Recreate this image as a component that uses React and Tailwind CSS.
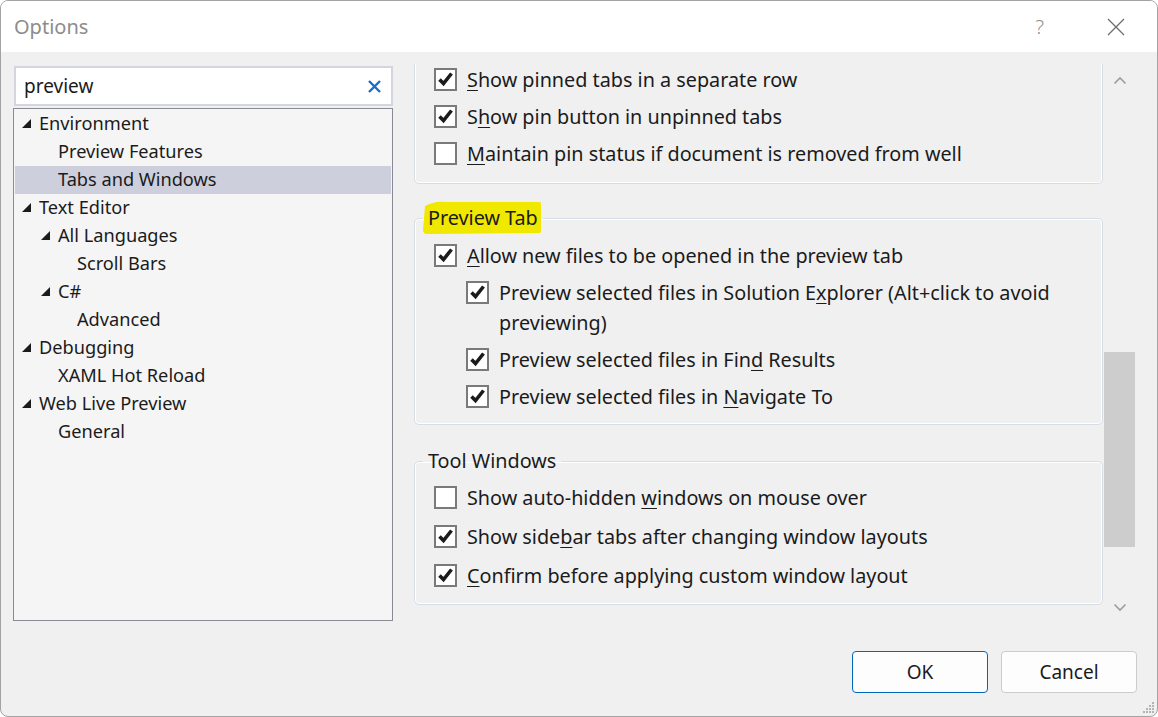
import React from "react";

const font = { fontFamily: '"Noto Sans", "Open Sans", sans-serif' };

const treeItems = [
  { label: "Environment", level: 0, open: true },
  { label: "Preview Features", level: 1 },
  { label: "Tabs and Windows", level: 1, selected: true },
  { label: "Text Editor", level: 0, open: true },
  { label: "All Languages", level: 1, open: true },
  { label: "Scroll Bars", level: 2 },
  { label: "C#", level: 1, open: true },
  { label: "Advanced", level: 2 },
  { label: "Debugging", level: 0, open: true },
  { label: "XAML Hot Reload", level: 1 },
  { label: "Web Live Preview", level: 0, open: true },
  { label: "General", level: 1 },
];

const indents = ["pl-[7px]", "pl-[26px]", "pl-[45px]"];

function Checkbox({ checked }) {
  return (
    <div className="w-[23px] h-[23px] border-2 border-[#7a7a7a] bg-white flex items-center justify-center shrink-0">
      {checked && (
        <svg width="17" height="17" viewBox="0 0 17 17">
          <path d="M2.5 8.5 L6.5 12.5 L14.5 2.5" fill="none" stroke="#1b1b1b" strokeWidth="3.6" strokeLinejoin="miter" />
        </svg>
      )}
    </div>
  );
}

// label with one underlined access key
function Key({ before, k, after }) {
  return (
    <>
      {before}
      <span className="underline underline-offset-[3px] decoration-1">{k}</span>
      {after}
    </>
  );
}

function Row({ checked, sub, tall, children }) {
  return (
    <div className={"flex items-start " + (sub ? "pl-[51px]" : "pl-[19px]")}>
      <div className={"flex items-center " + (tall ? "h-[39px]" : "h-[37px]")}>
        <Checkbox checked={checked} />
      </div>
      <div className={"ml-[10px] leading-[30px] " + (tall ? "py-[4.5px]" : "py-[3.5px]")}>{children}</div>
    </div>
  );
}

function Chevron({ up }) {
  return (
    <svg width="14" height="9" viewBox="0 0 14 9">
      <path d={up ? "M1.5 7.5 L7 2 L12.5 7.5" : "M1.5 1.5 L7 7 L12.5 1.5"} fill="none" stroke="#9c9c9c" strokeWidth="1.6" />
    </svg>
  );
}

export default function App() {
  return (
    <div
      className="w-[1158px] h-[717px] border border-[#a3a3a3] rounded-[8px] overflow-hidden flex flex-col bg-[#f0f0f0] text-[18px] text-[#1b1b1b]"
      style={font}
    >
      {/* title bar */}
      <div className="h-[51px] bg-white flex items-center shrink-0">
        <div className="ml-[13px] text-[20px] text-[#8c8c8c]">Options</div>
        <div className="ml-auto text-[20px] text-[#8f8f8f] font-light mr-[63px]">?</div>
        <svg width="18" height="18" viewBox="0 0 18 18" className="mr-[32px]">
          <path d="M1 1 L17 17 M17 1 L1 17" stroke="#6e6e6e" strokeWidth="1.3" />
        </svg>
      </div>

      {/* body */}
      <div className="relative flex-1 flex flex-col">
        <div className="flex mt-[12px] pl-[12px]">
          {/* left column */}
          <div className="w-[380px] flex flex-col">
            <div className="ml-[1px] mt-[2px] w-[379px] h-[40px] bg-white border-2 border-[#d3d6e0] flex items-center pl-[8px] pr-[8px]">
              <span className="text-[19px]">preview</span>
              <svg width="15" height="15" viewBox="0 0 15 15" className="ml-auto mr-[1px]">
                <path d="M2 2 L13 13 M13 2 L2 13" stroke="#1a6dc2" strokeWidth="2.4" />
              </svg>
            </div>
            <div className="mt-[2px] h-[513px] border border-[#8b8b96] bg-[#f5f5f5] pt-[1px] px-[1px] text-[18.2px]">
              {treeItems.map((it, i) => (
                <div
                  key={i}
                  className={
                    "h-[28px] flex items-center " +
                    indents[it.level] +
                    (it.selected ? " bg-[#cdcfdc]" : "")
                  }
                >
                  <div className="w-[17px] flex items-center">
                    {it.open && (
                      <svg width="9" height="9" viewBox="0 0 9 9" className="mt-[-1px]">
                        <polygon points="9,0 9,9 0,9" fill="#1b1b1b" />
                      </svg>
                    )}
                  </div>
                  <span>{it.label}</span>
                </div>
              ))}
            </div>
          </div>

          {/* options viewport */}
          <div className="ml-[21px] w-[689px] h-[557px] overflow-hidden text-[19.8px]">
            <div className="mt-[-20px] flex flex-col">
              <div className="border border-[#d7dde6] ring-1 ring-inset ring-white rounded-[5px] pt-[16px] pb-[11px]">
                <Row checked>
                  <Key k="S" after="how pinned tabs in a separate row" />
                </Row>
                <Row checked>
                  <Key before="S" k="h" after="ow pin button in unpinned tabs" />
                </Row>
                <Row>
                  <Key k="M" after="aintain pin status if document is removed from well" />
                </Row>
              </div>

              <fieldset className="mt-[20px] border border-[#d7dde6] ring-1 ring-inset ring-white rounded-[5px] pb-[9px]">
                <legend className="ml-[8px] px-[5px] h-[28px] leading-[28px] relative">
                  <svg
                    className="absolute left-0 top-[-4px]"
                    width="119"
                    height="36"
                    viewBox="0 0 119 36"
                    preserveAspectRatio="none"
                  >
                    <path
                      d="M2 6 C8 3 14 1 22 2 L116 2 C118 2 118 3 118 5 L118 31 C118 33 117 33 115 33 L4 34 C1 34 0 32 0 30 Z"
                      fill="#f1e800"
                    />
                  </svg>
                  <span className="relative">Preview Tab</span>
                </legend>
                <div className="pt-[5px]">
                  <Row checked>
                    <Key k="A" after="llow new files to be opened in the preview tab" />
                  </Row>
                  <Row checked sub>
                    Preview selected files in Solution E
                    <span className="underline underline-offset-[3px] decoration-1">x</span>
                    plorer (Alt+click to avoid
                    <br />
                    previewing)
                  </Row>
                  <Row checked sub>
                    <Key before="Preview selected files in Fin" k="d" after=" Results" />
                  </Row>
                  <Row checked sub>
                    <Key before="Preview selected files in " k="N" after="avigate To" />
                  </Row>
                </div>
              </fieldset>

              <fieldset className="mt-[22px] border border-[#d7dde6] ring-1 ring-inset ring-white rounded-[5px] pb-[9px]">
                <legend className="ml-[8px] px-[5px] h-[28px] leading-[28px]">Tool Windows</legend>
                <div className="pt-[3px]">
                  <Row tall>
                    <Key before="Show auto-hidden " k="w" after="indows on mouse over" />
                  </Row>
                  <Row checked tall>
                    <Key before="Show side" k="b" after="ar tabs after changing window layouts" />
                  </Row>
                  <Row checked tall>
                    <Key k="C" after="onfirm before applying custom window layout" />
                  </Row>
                </div>
              </fieldset>
            </div>
          </div>

          {/* scrollbar */}
          <div className="ml-[1px] w-[31px] h-[557px] flex flex-col items-center">
            <div className="mt-[12px]">
              <Chevron up />
            </div>
            <div className="mt-[267px] w-[31px] h-[195px] bg-[#cdcdcd]" />
            <div className="mt-[56px]">
              <Chevron />
            </div>
          </div>
        </div>

        {/* buttons */}
        <div className="flex justify-end gap-[13px] pr-[20px] mt-[30px]">
          <button className="w-[136px] h-[42px] rounded-[4px] border border-[#0067c0] bg-[#fdfdfd] text-[19px] text-[#1b1b1b]">
            OK
          </button>
          <button className="w-[136px] h-[42px] rounded-[4px] border border-[#cccccc] bg-[#fdfdfd] text-[19px] text-[#1b1b1b]">
            Cancel
          </button>
        </div>

        {/* resize grip */}
        <svg width="12" height="12" viewBox="0 0 12 12" className="absolute right-[2px] bottom-[2px]">
          {[
            [9, 0],
            [6, 3],
            [9, 3],
            [3, 6],
            [6, 6],
            [9, 6],
            [0, 9],
            [3, 9],
            [6, 9],
            [9, 9],
          ].map(([x, y], i) => (
            <rect key={i} x={x} y={y} width="2" height="2" fill="#b4b4b4" />
          ))}
        </svg>
      </div>
    </div>
  );
}
